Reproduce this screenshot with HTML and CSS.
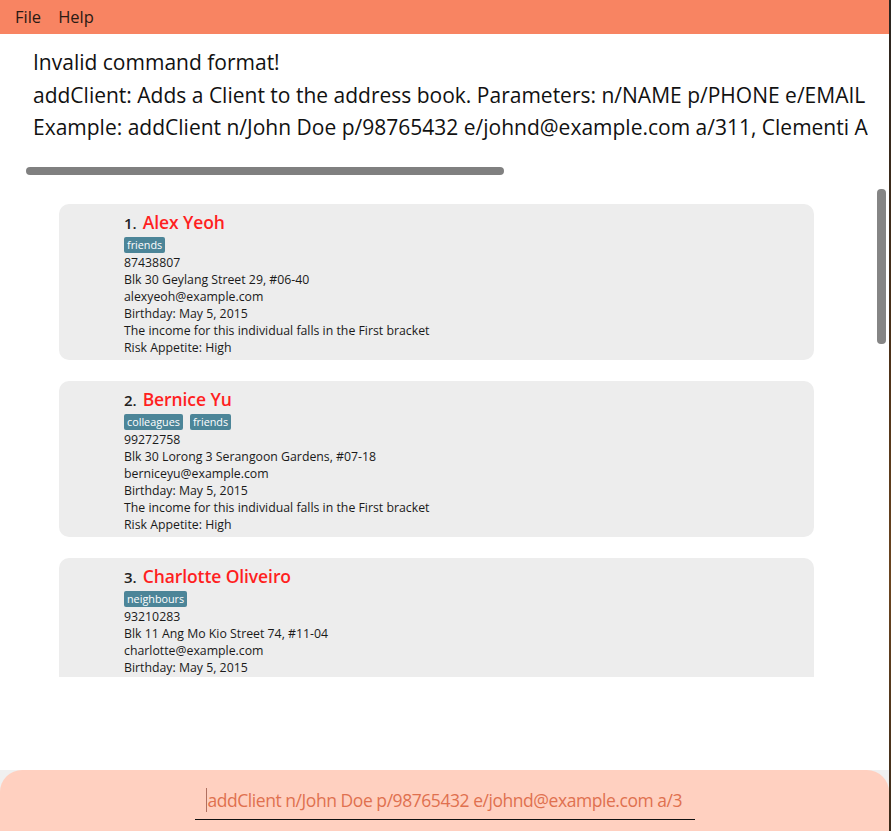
FILE: index.html
```html
<!DOCTYPE html>
<html>
<head>
<meta charset="utf-8">
<link rel="stylesheet" href="styles.css">
</head>
<body>
<div class="window">
  <div class="menubar">
    <span class="menu-item">File</span>
    <span class="menu-item">Help</span>
  </div>
  <div class="result">
    <div class="result-text">
      <div class="result-line">Invalid command format!</div>
      <div class="result-line">addClient: Adds a Client to the address book. Parameters: n/NAME p/PHONE e/EMAIL</div>
      <div class="result-line">Example: addClient n/John Doe p/98765432 e/johnd@example.com a/311, Clementi A</div>
    </div>
    <div class="hscroll"></div>
  </div>
  <div class="list-pane">
    <div class="list">
      <div class="card">
        <div class="title"><span class="idx">1.</span><span class="name">Alex Yeoh</span></div>
        <div class="tags"><span class="tag">friends</span></div>
        <div class="line">87438807</div>
        <div class="line">Blk 30 Geylang Street 29, #06-40</div>
        <div class="line">alexyeoh@example.com</div>
        <div class="line">Birthday: May 5, 2015</div>
        <div class="line">The income for this individual falls in the First bracket</div>
        <div class="line">Risk Appetite: High</div>
      </div>
      <div class="card">
        <div class="title"><span class="idx">2.</span><span class="name">Bernice Yu</span></div>
        <div class="tags"><span class="tag">colleagues</span><span class="tag">friends</span></div>
        <div class="line">99272758</div>
        <div class="line">Blk 30 Lorong 3 Serangoon Gardens, #07-18</div>
        <div class="line">berniceyu@example.com</div>
        <div class="line">Birthday: May 5, 2015</div>
        <div class="line">The income for this individual falls in the First bracket</div>
        <div class="line">Risk Appetite: High</div>
      </div>
      <div class="card">
        <div class="title"><span class="idx">3.</span><span class="name">Charlotte Oliveiro</span></div>
        <div class="tags"><span class="tag">neighbours</span></div>
        <div class="line">93210283</div>
        <div class="line">Blk 11 Ang Mo Kio Street 74, #11-04</div>
        <div class="line">charlotte@example.com</div>
        <div class="line">Birthday: May 5, 2015</div>
      </div>
    </div>
    <div class="vscroll"></div>
  </div>
  <div class="spacer"></div>
  <div class="command-wrap">
    <div class="command">
      <div class="input"><span class="caret"></span>addClient n/John Doe p/98765432 e/johnd@example.com a/3</div>
    </div>
  </div>
</div>
</body>
</html>
```

FILE: styles.css
```css
html, body {
  margin: 0;
  padding: 0;
}
body {
  width: 891px;
  height: 831px;
  overflow: hidden;
  background: linear-gradient(#2a2520 0%, #4a3018 40%, #6b4520 70%, #3a2a1a 100%);
  font-family: "Open Sans", "Noto Sans", sans-serif;
}
.window {
  width: 889px;
  height: 831px;
  background: #ffffff;
  display: flex;
  flex-direction: column;
}
.menubar {
  height: 34px;
  background: #f88462;
  display: flex;
  align-items: center;
  padding-left: 15px;
  padding-bottom: 2px;
  box-sizing: border-box;
  gap: 17px;
  flex: none;
}
.menu-item {
  font-size: 16.5px;
  color: #2a1a14;
  font-weight: 400;
}
.result {
  height: 155px;
  flex: none;
  padding-top: 12px;
  box-sizing: border-box;
}
.result-text {
  padding-left: 33px;
  width: 835px;
  overflow: hidden;
  white-space: nowrap;
}
.result-line {
  font-size: 21px;
  line-height: 32.5px;
  color: #111111;
  letter-spacing: 0;
}
.hscroll {
  margin-top: 23px;
  margin-left: 26px;
  width: 478px;
  height: 8px;
  border-radius: 4px;
  background: #808080;
}
.list-pane {
  position: relative;
  height: 488px;
  flex: none;
  overflow: hidden;
}
.list {
  padding-top: 15px;
  display: flex;
  flex-direction: column;
  gap: 21px;
}
.card {
  margin-left: 59px;
  width: 755px;
  background: #ededed;
  border-radius: 10px;
  padding: 6px 0 5px 65px;
  box-sizing: border-box;
  height: 156px;
  flex: none;
}
.title {
  display: flex;
  align-items: baseline;
  height: 26px;
}
.idx {
  font-size: 15px;
  color: #222222;
  font-weight: 600;
  margin-right: 6px;
}
.name {
  font-size: 17.5px;
  color: #ff1f1f;
  font-weight: 600;
  letter-spacing: -0.1px;
}
.tags {
  display: flex;
  gap: 7px;
  height: 16px;
  margin-top: 1px;
  margin-bottom: 1px;
}
.tag {
  background: #4c8598;
  color: #ffffff;
  font-size: 10.8px;
  line-height: 16px;
  padding: 0 3px;
  border-radius: 2px;
}
.line {
  font-size: 12.3px;
  line-height: 17px;
  color: #1a1a1a;
  letter-spacing: 0;
  white-space: nowrap;
}
.vscroll {
  position: absolute;
  right: 3px;
  top: 0;
  width: 9px;
  height: 155px;
  border-radius: 4px;
  background: #858585;
}
.spacer {
  flex: 1;
}
.command-wrap {
  background: #f0f0f0;
  flex: none;
}
.command {
  height: 61px;
  background: #ffd0c0;
  border-radius: 22px 22px 0 0;
  display: flex;
  justify-content: center;
  padding-top: 18px;
  box-sizing: border-box;
}
.input {
  width: 500px;
  height: 32px;
  border-bottom: 1px solid #111111;
  box-sizing: border-box;
  padding-left: 11px;
  padding-bottom: 7px;
  font-size: 17.5px;
  line-height: 26px;
  color: #e0704f;
  letter-spacing: -0.45px;
  display: flex;
  align-items: center;
  white-space: nowrap;
}
.caret {
  display: inline-block;
  width: 1px;
  height: 24px;
  background: #b07060;
  margin-right: 1px;
}
```
